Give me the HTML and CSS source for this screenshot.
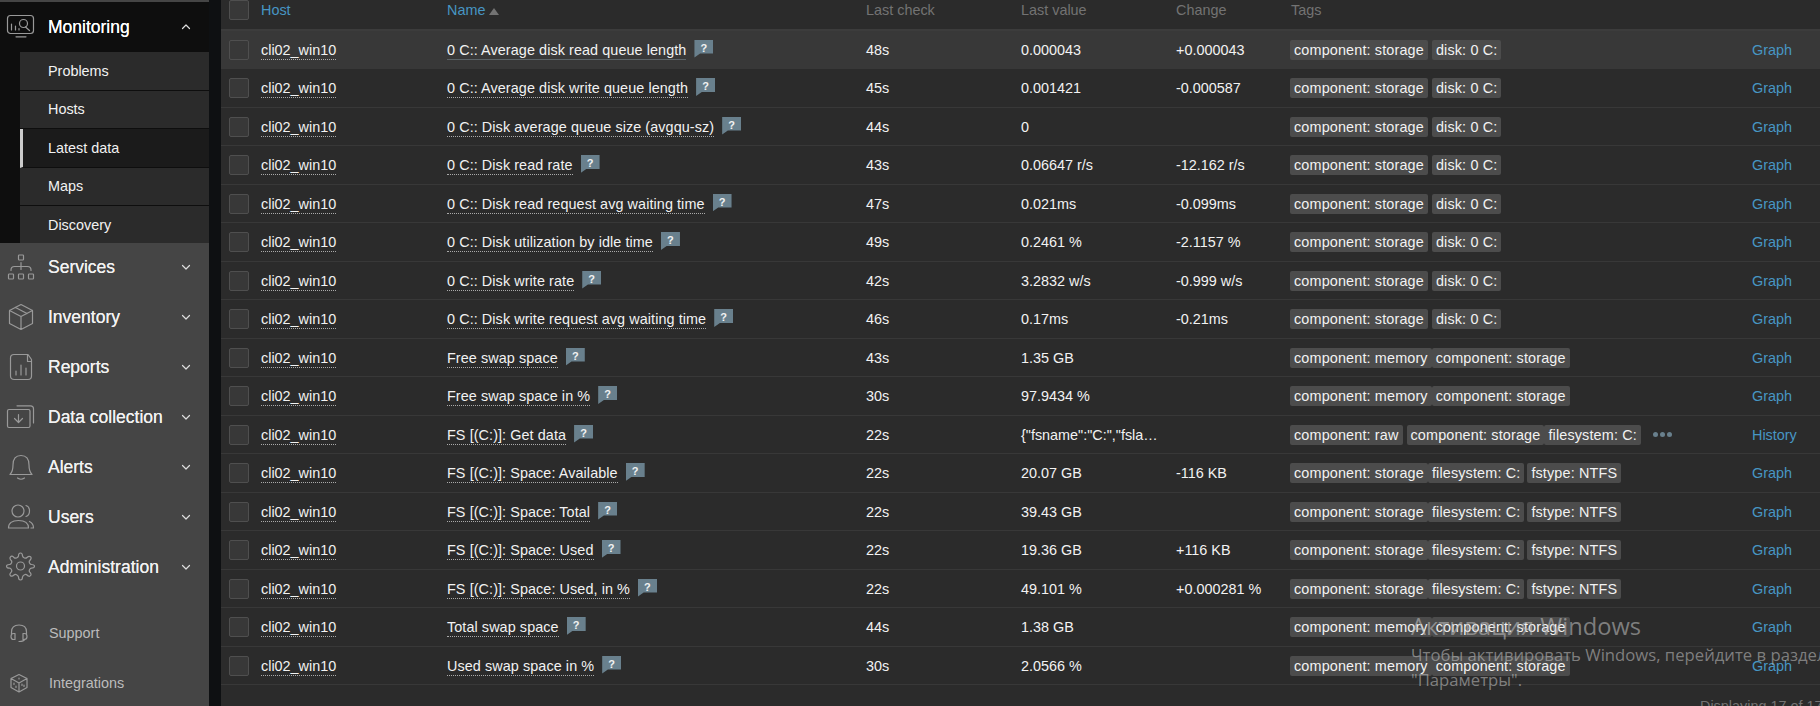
FILE: index.html
```html
<!DOCTYPE html>
<html lang="en">
<head>
<meta charset="utf-8">
<title>Latest data</title>
<link rel="stylesheet" href="styles.css">
</head>
<body>
<div class="app">
<nav class="sidebar">
  <div class="menu-open">
    <a class="main-item"><svg class="icon" viewBox="0 0 30 30"><rect x="2.5" y="3.5" width="26" height="18" rx="3"/><path d="M11 24.8h10M6.500 18v-6M10.500 18v-4M14 18v-1.500M20.500 15l4 3.500"/><circle cx="18.500" cy="11.500" r="4"/></svg><span class="label">Monitoring</span><svg class="chev" viewBox="0 0 10 10"><path d="M1.500 6.500 5 3l3.500 3.500"/></svg></a>
    <div class="submenu">
      <a class="sub-item">Problems</a>
      <a class="sub-item">Hosts</a>
      <a class="sub-item selected">Latest data</a>
      <a class="sub-item">Maps</a>
      <a class="sub-item">Discovery</a>
    </div>
  </div>
  <a class="main-item"><svg class="icon" viewBox="0 0 30 30"><rect x="13.500" y="3" width="5" height="5" rx=".8"/><rect x="3.500" y="22" width="5" height="5" rx=".8"/><rect x="13.500" y="22" width="5" height="5" rx=".8"/><rect x="23.500" y="22" width="5" height="5" rx=".8"/><path d="M16 10.500v7M6 18.500v-.5q0-3.500 3.500-3.500h13q3.500 0 3.500 3.500v.5"/></svg><span class="label">Services</span><svg class="chev" viewBox="0 0 10 10"><path d="M1.500 3.500 5 7l3.500-3.500"/></svg></a>
  <a class="main-item"><svg class="icon" viewBox="0 0 30 30"><path d="m16 2.500 11.500 6v13L16 27.500l-11.500-6v-13zM4.500 8.500 16 14.500l11.500-6M16 14.500v13M10.500 5.500l11.500 6"/></svg><span class="label">Inventory</span><svg class="chev" viewBox="0 0 10 10"><path d="M1.500 3.500 5 7l3.500-3.500"/></svg></a>
  <a class="main-item"><svg class="icon" viewBox="0 0 30 30"><path d="M9 2.500h14l3.500 5V24q0 3.500-3.500 3.500H9.500Q5.500 27.500 5.500 24V6Q5.500 2.500 9 2.500zM22.500 2.500V9.500h4M11 23v-4M16 23V13M21 23v-7"/></svg><span class="label">Reports</span><svg class="chev" viewBox="0 0 10 10"><path d="M1.500 3.500 5 7l3.500-3.500"/></svg></a>
  <a class="main-item"><svg class="icon" viewBox="0 0 30 30"><rect x="2.500" y="7.500" width="22.500" height="18" rx="1.500"/><path d="M12 3.800h13.500q3 0 3 3V21M13.500 12.500v8M9.500 16.500l4 4 4-4"/></svg><span class="label">Data collection</span><svg class="chev" viewBox="0 0 10 10"><path d="M1.500 3.500 5 7l3.500-3.500"/></svg></a>
  <a class="main-item"><svg class="icon" viewBox="0 0 30 30"><path d="M5 22.500q3-3 3-9.500 0-9.500 8-9.500t8 9.500q0 6.500 3 9.500zM12.500 26q3.500 2.500 7 0"/></svg><span class="label">Alerts</span><svg class="chev" viewBox="0 0 10 10"><path d="M1.500 3.500 5 7l3.500-3.500"/></svg></a>
  <a class="main-item"><svg class="icon" viewBox="0 0 30 30"><circle cx="13" cy="9" r="6"/><path d="M3.500 26q0-7.500 10-7.500T23.500 26zM21 3.500q3.500 1 3.500 5.500t-3.500 5.500M24.500 19.500q4 2 4 6.500h-2.500"/></svg><span class="label">Users</span><svg class="chev" viewBox="0 0 10 10"><path d="M1.500 3.500 5 7l3.500-3.500"/></svg></a>
  <a class="main-item"><svg class="icon" viewBox="0 0 30 30"><circle cx="15.500" cy="14" r="4"/><path d="M13.500 4q0-3 2-3t2 3q.5 1.500 2 2 1.500.5 2.500-.5 2-2 3.500-.7t-.7 3.700q-1 1-.3 2.500t2 1.500q3 0 3 1.800t-3 1.900q-1.300.1-2 1.500t.3 2.500q2 2 .7 3.500t-3.500-.7q-1-1-2.500-.3t-2 2.300q0 3-2 3t-2-3q-.5-1.600-2-2.300t-2.500.3q-2 2-3.500.7t.7-3.500q1-1 .3-2.500t-2-1.500q-3 0-3-1.900t3-1.800q1.300 0 2-1.500t-.3-2.500q-2-2-.7-3.700t3.500.7q1 1 2.500.5 1.500-.5 2-2z"/></svg><span class="label">Administration</span><svg class="chev" viewBox="0 0 10 10"><path d="M1.500 3.500 5 7l3.500-3.500"/></svg></a>
  <div class="footer-menu">
    <a class="foot-item"><svg class="icon-s" viewBox="0 0 20 20"><path d="M2.500 11.500V9q0-7 7.500-7t7.500 7v2.500M6 10.500v6H4.500q-2.500 0-2.500-3t2.500-3zM14 10.500v6h1.500q2.500 0 2.500-3t-2.500-3zM16 16q-1 2.500-6 2.500"/></svg><span>Support</span></a>
    <a class="foot-item"><svg class="icon-s" viewBox="0 0 20 20"><path d="m10 1.500 8 4v9l-8 4.500-8-4.500v-9zM2 5.500l8 4.500 8-4.500M10 10v9M10 5v1M5 10v1.500M7 13v1.500M13 11v1.500M15 12v1.500"/></svg><span>Integrations</span></a>
  </div>
</nav>
<main class="content">
<div class="row head"><i class="check"></i><a class="link">Host</a><a class="link">Name<i class="sort"></i></a><span>Last check</span><span>Last value</span><span>Change</span><span class="tags-head">Tags</span></div>
<div class="row hover"><i class="check"></i><div><a class="dot">cli02_win10</a></div><div class="name"><a class="dot solid">0 C:: Average disk read queue length</a><b class="hint">?</b></div><span>48s</span><span>0.000043</span><span>+0.000043</span><div class="tags"><em>component: storage</em><em>disk: 0 C:</em></div><a class="link">Graph</a></div>
<div class="row"><i class="check"></i><div><a class="dot">cli02_win10</a></div><div class="name"><a class="dot">0 C:: Average disk write queue length</a><b class="hint">?</b></div><span>45s</span><span>0.001421</span><span>-0.000587</span><div class="tags"><em>component: storage</em><em>disk: 0 C:</em></div><a class="link">Graph</a></div>
<div class="row"><i class="check"></i><div><a class="dot">cli02_win10</a></div><div class="name"><a class="dot">0 C:: Disk average queue size (avgqu-sz)</a><b class="hint">?</b></div><span>44s</span><span>0</span><span></span><div class="tags"><em>component: storage</em><em>disk: 0 C:</em></div><a class="link">Graph</a></div>
<div class="row"><i class="check"></i><div><a class="dot">cli02_win10</a></div><div class="name"><a class="dot">0 C:: Disk read rate</a><b class="hint">?</b></div><span>43s</span><span>0.06647 r/s</span><span>-12.162 r/s</span><div class="tags"><em>component: storage</em><em>disk: 0 C:</em></div><a class="link">Graph</a></div>
<div class="row"><i class="check"></i><div><a class="dot">cli02_win10</a></div><div class="name"><a class="dot">0 C:: Disk read request avg waiting time</a><b class="hint">?</b></div><span>47s</span><span>0.021ms</span><span>-0.099ms</span><div class="tags"><em>component: storage</em><em>disk: 0 C:</em></div><a class="link">Graph</a></div>
<div class="row"><i class="check"></i><div><a class="dot">cli02_win10</a></div><div class="name"><a class="dot">0 C:: Disk utilization by idle time</a><b class="hint">?</b></div><span>49s</span><span>0.2461 %</span><span>-2.1157 %</span><div class="tags"><em>component: storage</em><em>disk: 0 C:</em></div><a class="link">Graph</a></div>
<div class="row"><i class="check"></i><div><a class="dot">cli02_win10</a></div><div class="name"><a class="dot">0 C:: Disk write rate</a><b class="hint">?</b></div><span>42s</span><span>3.2832 w/s</span><span>-0.999 w/s</span><div class="tags"><em>component: storage</em><em>disk: 0 C:</em></div><a class="link">Graph</a></div>
<div class="row"><i class="check"></i><div><a class="dot">cli02_win10</a></div><div class="name"><a class="dot">0 C:: Disk write request avg waiting time</a><b class="hint">?</b></div><span>46s</span><span>0.17ms</span><span>-0.21ms</span><div class="tags"><em>component: storage</em><em>disk: 0 C:</em></div><a class="link">Graph</a></div>
<div class="row"><i class="check"></i><div><a class="dot">cli02_win10</a></div><div class="name"><a class="dot">Free swap space</a><b class="hint">?</b></div><span>43s</span><span>1.35 GB</span><span></span><div class="tags"><em class="joined">component: memory</em><em>component: storage</em></div><a class="link">Graph</a></div>
<div class="row"><i class="check"></i><div><a class="dot">cli02_win10</a></div><div class="name"><a class="dot">Free swap space in %</a><b class="hint">?</b></div><span>30s</span><span>97.9434 %</span><span></span><div class="tags"><em class="joined">component: memory</em><em>component: storage</em></div><a class="link">Graph</a></div>
<div class="row"><i class="check"></i><div><a class="dot">cli02_win10</a></div><div class="name"><a class="dot">FS [(C:)]: Get data</a><b class="hint">?</b></div><span>22s</span><span>{"fsname":"C:","fsla…</span><span></span><div class="tags"><em>component: raw</em><em class="joined">component: storage</em><em>filesystem: C:</em><span class="more"><i></i><i></i><i></i></span></div><a class="link">History</a></div>
<div class="row"><i class="check"></i><div><a class="dot">cli02_win10</a></div><div class="name"><a class="dot">FS [(C:)]: Space: Available</a><b class="hint">?</b></div><span>22s</span><span>20.07 GB</span><span>-116 KB</span><div class="tags"><em class="joined">component: storage</em><em class="near">filesystem: C:</em><em>fstype: NTFS</em></div><a class="link">Graph</a></div>
<div class="row"><i class="check"></i><div><a class="dot">cli02_win10</a></div><div class="name"><a class="dot">FS [(C:)]: Space: Total</a><b class="hint">?</b></div><span>22s</span><span>39.43 GB</span><span></span><div class="tags"><em class="joined">component: storage</em><em class="near">filesystem: C:</em><em>fstype: NTFS</em></div><a class="link">Graph</a></div>
<div class="row"><i class="check"></i><div><a class="dot">cli02_win10</a></div><div class="name"><a class="dot">FS [(C:)]: Space: Used</a><b class="hint">?</b></div><span>22s</span><span>19.36 GB</span><span>+116 KB</span><div class="tags"><em class="joined">component: storage</em><em class="near">filesystem: C:</em><em>fstype: NTFS</em></div><a class="link">Graph</a></div>
<div class="row"><i class="check"></i><div><a class="dot">cli02_win10</a></div><div class="name"><a class="dot">FS [(C:)]: Space: Used, in %</a><b class="hint">?</b></div><span>22s</span><span>49.101 %</span><span>+0.000281 %</span><div class="tags"><em class="joined">component: storage</em><em class="near">filesystem: C:</em><em>fstype: NTFS</em></div><a class="link">Graph</a></div>
<div class="row"><i class="check"></i><div><a class="dot">cli02_win10</a></div><div class="name"><a class="dot">Total swap space</a><b class="hint">?</b></div><span>44s</span><span>1.38 GB</span><span></span><div class="tags"><em class="joined">component: memory</em><em>component: storage</em></div><a class="link">Graph</a></div>
<div class="row"><i class="check"></i><div><a class="dot">cli02_win10</a></div><div class="name"><a class="dot">Used swap space in %</a><b class="hint">?</b></div><span>30s</span><span>2.0566 %</span><span></span><div class="tags"><em class="joined">component: memory</em><em>component: storage</em></div><a class="link">Graph</a></div>
<div class="total">Displaying 17 of 17 found</div>
</main>
</div>
<div class="watermark"><div class="wm-title">Активация Windows</div><div class="wm-text">Чтобы активировать Windows, перейдите в раздел<br>"Параметры".</div></div>
</body>
</html>
```
FILE: styles.css
```css
* { box-sizing: border-box; }
body { margin: 0; width: 1820px; height: 706px; overflow: hidden; background: #0e1012; color: #f2f2f2; font: 14.4px "Liberation Sans", Arial, sans-serif; }
.app { display: flex; height: 706px; overflow: hidden; }
.sidebar { width: 209px; margin-right: 12px; background: #454545; padding-top: 2px; flex: none; }
.menu-open { background: #0e0e0e; height: 241px; margin-bottom: -1px; overflow: hidden; }
.main-item { display: flex; align-items: center; height: 50px; padding: 0 18px 0 5px; font-size: 17.5px; color: #f2f2f2; letter-spacing: 0; }
.icon { width: 30px; height: 30px; margin-right: 13px; flex: none; }
.icon, .icon-s, .chev { fill: none; stroke: #999; stroke-width: 1.2; stroke-linejoin: round; stroke-linecap: round; }
.label { flex: 1; white-space: nowrap; text-shadow: 0 0 .6px currentColor; }
.menu-open .label { color: #fff; }
.chev { width: 10px; height: 10px; stroke: #ddd; }
.submenu { margin-left: 20px; }
.sub-item { display: flex; align-items: center; height: 38.5px; padding-left: 28px; background: #2b2b2b; border-bottom: 1px solid #0e0e0e; }
.sub-item.selected { background: #1b1b1b; border-left: 3px solid #ccc; padding-left: 25px; }
.footer-menu { padding-top: 16px; }
.foot-item { display: flex; align-items: center; height: 50px; padding-left: 9px; color: #bcbcbc; }
.icon-s { width: 20px; height: 20px; margin-right: 20px; }
.content { width: 1599px; background: #2b2b2b; }
.row { display: grid; grid-template-columns: 32px 186px 419px 155px 155px 114px 462px 1fr; align-items: center; height: 38.5px; padding: .5px 0 0 8px; border-bottom: 1px solid #383838; white-space: nowrap; }
.row.head { height: 30.5px; padding: 0 0 10px 8px; border-bottom: 2px solid #3c3c3c; color: #737373; }
.row.hover { background: #383838; }
.tags-head { padding-left: 1px; }
.check { width: 20px; height: 20px; border: 1px solid #4f4f4f; border-radius: 2px; background: #383838; }
.link { color: #4796c4; }
.sort { display: inline-block; margin-left: 4px; border: 5px solid transparent; border-top: 0; border-bottom: 7px solid #737373; }
.row > div { display: flex; align-items: center; }
.dot { line-height: 18px; border-bottom: 1px dotted #aaa; padding-top: 1px; }
.name .dot { letter-spacing: .08px; }
.dot.solid { border-bottom: 1px solid #5c6468; }
.hint { width: 19px; height: 18px; margin: -2px 0 0 8px; background: #69808d; clip-path: polygon(0 0, 100% 0, 100% 78%, 30% 78%, 0 100%); font-size: 11px; line-height: 16px; text-align: center; }
.tags em { font-style: normal; height: 20px; line-height: 20px; padding: 0 4px; margin-right: 4px; border-radius: 2px; background: #4c4c4c; letter-spacing: .15px; }
.tags em.joined { margin-right: 0; }
.tags em.near { margin-right: 3px; }
.more { display: flex; gap: 2px; margin-left: 8px; }
.more i { width: 5px; height: 5px; border-radius: 50%; background: #69808d; }
.total { padding: 13px 0 0 1479px; white-space: nowrap; color: #737373; }
.watermark { position: absolute; left: 1411px; top: 610px; white-space: nowrap; color: rgba(190, 190, 190, .58); font-family: "Open Sans", "Noto Sans", sans-serif; }
.wm-title { font-size: 23.7px; line-height: 32px; }
.wm-text { font-size: 16.7px; line-height: 25px; }
```
